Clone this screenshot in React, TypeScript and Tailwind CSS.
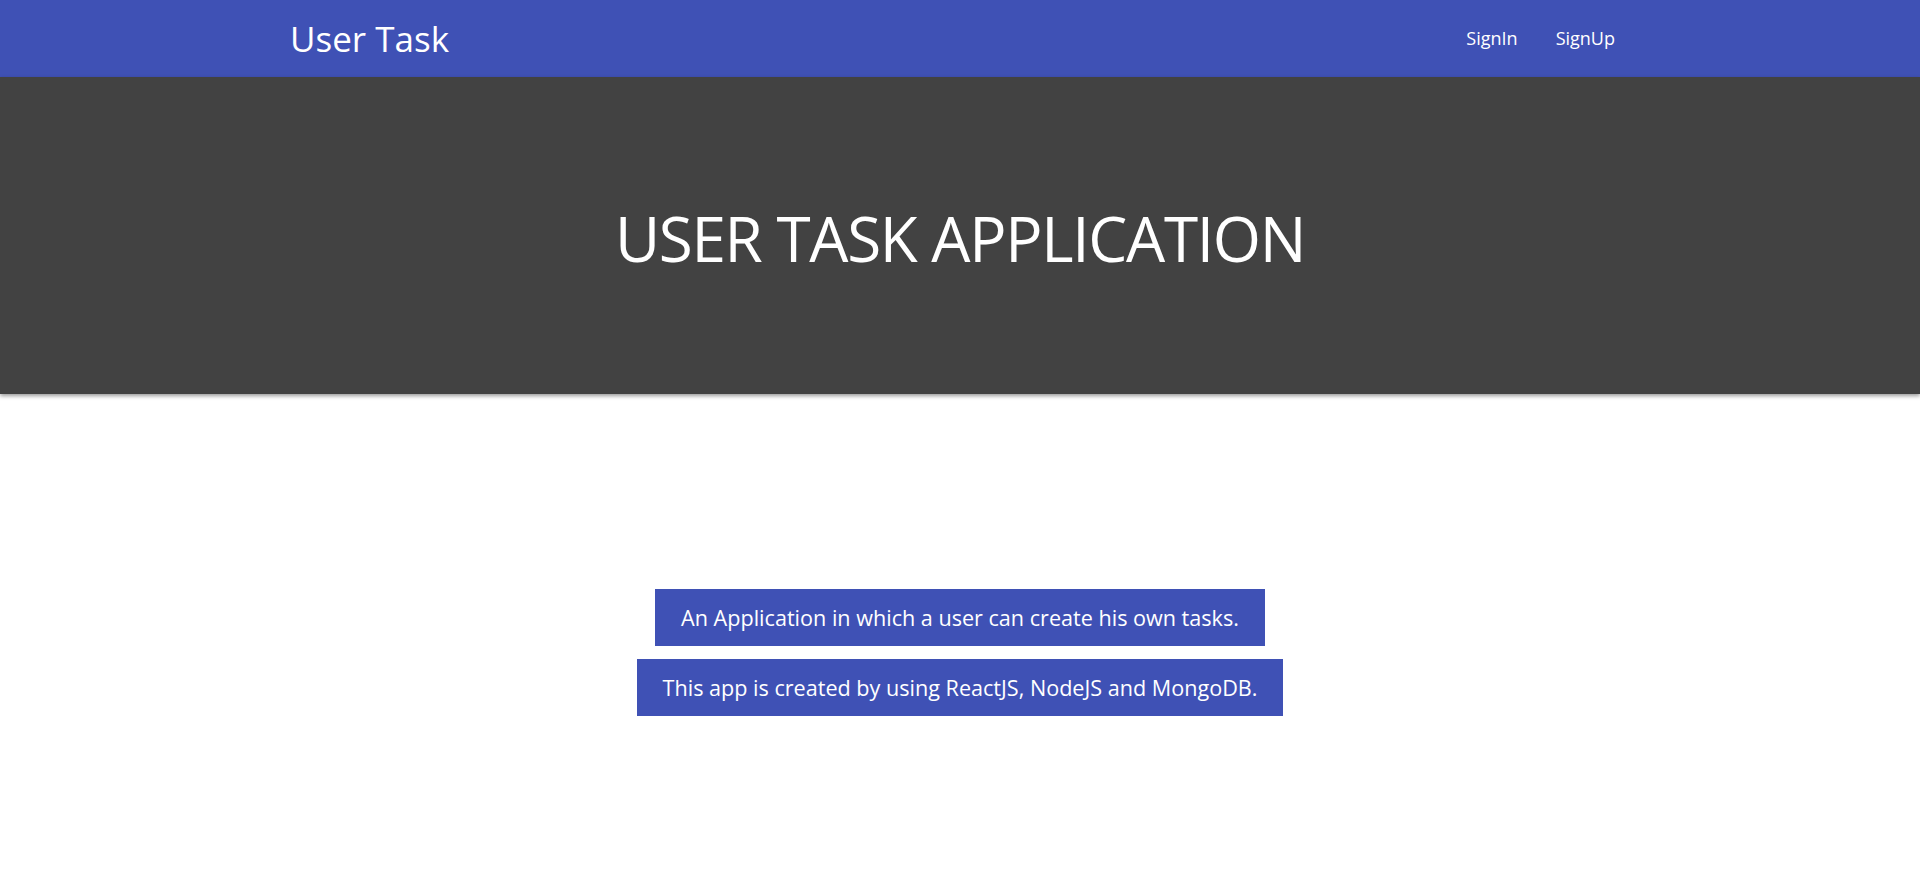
export default function App() {
  return (
    <div className="min-h-screen bg-white font-['Open_Sans',sans-serif]">
      <nav className="h-[77px] bg-[#3f51b5] text-white">
        <div className="mx-auto flex h-full w-[1340px] items-center justify-between">
          <a href="#" className="text-[35px] leading-none">User Task</a>
          <div className="flex items-center gap-[8px]">
            <a href="#" className="px-[15px] text-[18px]">SignIn</a>
            <a href="#" className="px-[15px] text-[18px]">SignUp</a>
          </div>
        </div>
      </nav>

      <header className="flex h-[317px] items-center justify-center bg-[#424242] pt-[6px] shadow-[0_2px_4px_rgba(0,0,0,0.4)]">
        <h1 className="text-[62px] tracking-[-1.3px] text-white">USER TASK APPLICATION</h1>
      </header>

      <main className="flex flex-col items-center gap-[13px] pt-[195px]">
        <p className="bg-[#3f51b5] px-[26px] py-[14px] text-[21.6px] leading-[29px] text-white">
          An Application in which a user can create his own tasks.
        </p>
        <p className="bg-[#3f51b5] px-[26px] py-[14px] text-[21.6px] leading-[29px] text-white">
          This app is created by using ReactJS, NodeJS and MongoDB.
        </p>
      </main>
    </div>
  );
}
